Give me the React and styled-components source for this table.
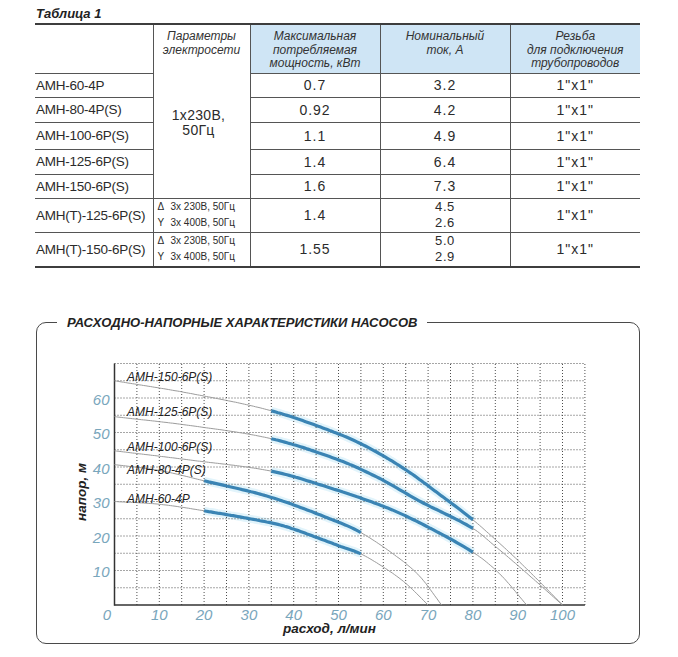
import React from 'react';
import styled, { createGlobalStyle } from 'styled-components';

const GlobalStyle = createGlobalStyle`
  body {
    margin: 0;
    background: #fff;
    font-family: "Liberation Sans", Arial, sans-serif;
    color: #2b2b2b;
  }
`;

const Page = styled.div`
  width: 678px;
  padding: 6px 0 0 35px;
  box-sizing: border-box;
`;

const Caption = styled.div`
  font-size: 13px;
  font-weight: bold;
  font-style: italic;
  line-height: 16px;
  padding-left: 1px;
  margin-bottom: 1px;
  color: #222;
`;

const Table = styled.table`
  width: 605px;
  border-collapse: collapse;
  table-layout: fixed;
  border-top: 2px solid #3d3d3d;
  border-bottom: 2px solid #3d3d3d;
`;

const HeadRow = styled.tr`
  height: 49px;
`;

const BodyRow = styled.tr`
  height: ${p => p.$h}px;
`;

const Th = styled.th`
  font-weight: normal;
  font-style: italic;
  font-size: 12px;
  line-height: 13.5px;
  color: #333;
  vertical-align: top;
  padding: 5px 2px 0;
  text-align: center;
  background: ${p => (p.$blue ? '#cfe5f5' : 'transparent')};
  border-left: ${p => (p.$first ? 'none' : '1px solid #555')};
  border-bottom: 1px solid #555;
`;

const SupplyCell = styled.td`
  vertical-align: top;
  text-align: center;
  padding: 5px 2px 0;
  border-left: 1px solid #555;
  border-bottom: 1px solid #555;
`;

const HeadText = styled.div`
  font-style: italic;
  font-size: 12px;
  line-height: 13.5px;
  color: #333;
`;

const Supply = styled.div`
  margin-top: 51px;
  font-size: 14px;
  line-height: 15px;
  letter-spacing: 0.3px;
  padding-right: 6px;
`;

const NameCell = styled.td`
  font-size: 13.5px;
  letter-spacing: -0.25px;
  padding: 0 0 0 1px;
  white-space: nowrap;
  vertical-align: middle;
  border-bottom: 1px solid #555;
`;

const ValueCell = styled.td`
  font-size: ${p => (p.$small ? 13 : 14)}px;
  line-height: ${p => (p.$small ? '16.5px' : '16px')};
  letter-spacing: ${p => (p.$small ? '0.6px' : '1px')};
  text-align: center;
  vertical-align: middle;
  padding: 0;
  border-left: 1px solid #555;
  border-bottom: 1px solid #555;
`;

const PhaseCell = styled.td`
  font-size: 10px;
  line-height: 16px;
  padding: 0 0 0 4px;
  vertical-align: middle;
  white-space: nowrap;
  overflow: hidden;
  border-left: 1px solid #555;
  border-bottom: 1px solid #555;
`;

const Sym = styled.span`
  display: inline-block;
  width: 13px;
`;

const Frame = styled.fieldset`
  width: 604px;
  margin: 47px 0 0 1px;
  padding: 0;
  border: 1.5px solid #4a4a4a;
  border-radius: 10px;
  box-sizing: border-box;
`;

const Legend = styled.legend`
  margin-left: 20px;
  padding: 0 10px;
  font-size: 13px;
  line-height: 15px;
  font-weight: bold;
  font-style: italic;
  color: #222;
`;

const Svg = styled.svg`
  display: block;
  font-family: "Liberation Sans", Arial, sans-serif;
`;

const GridLine = styled.line`
  stroke: #4d4d4d;
  stroke-width: 1;
  stroke-dasharray: 1 2;
`;

const AxisLine = styled.line`
  stroke: #333;
  stroke-width: 1.5;
`;

const ThinCurve = styled.path`
  fill: none;
  stroke: #9c9c9c;
  stroke-width: 1;
`;

const Glow = styled.path`
  fill: none;
  stroke: #e2f4fb;
  stroke-width: 8;
`;

const ThickCurve = styled.path`
  fill: none;
  stroke: #3a84b4;
  stroke-width: 3.2;
`;

const CurveLabel = styled.text`
  font-size: 12px;
  font-style: italic;
  fill: #222;
`;

const TickLabel = styled.text`
  font-size: 15px;
  font-style: italic;
  fill: #79a6bc;
  text-anchor: ${p => p.$anchor || 'middle'};
`;

const AxisTitle = styled.text`
  font-size: 13.5px;
  font-weight: bold;
  font-style: italic;
  fill: #222;
  text-anchor: middle;
`;

const rows = [
  { name: 'АМН-60-4Р', p: '0.7', i: ['3.2'], h: 24 },
  { name: 'АМН-80-4Р(S)', p: '0.92', i: ['4.2'], h: 25 },
  { name: 'АМН-100-6Р(S)', p: '1.1', i: ['4.9'], h: 27 },
  { name: 'АМН-125-6Р(S)', p: '1.4', i: ['6.4'], h: 25 },
  { name: 'АМН-150-6Р(S)', p: '1.6', i: ['7.3'], h: 24 },
  { name: 'АМН(Т)-125-6Р(S)', p: '1.4', i: ['4.5', '2.6'], h: 34, three: true },
  { name: 'АМН(Т)-150-6Р(S)', p: '1.55', i: ['5.0', '2.9'], h: 31, three: true },
];

// chart scale: page coordinates
const QX = q => 115 + q * 4.48;
const HY = h => 606 - h * 3.45;

const curves = [
  {
    label: 'АМН-150-6Р(S)', ly: 382, work: [35, 80],
    pts: [[0, 65], [17, 61.3], [35, 56.3], [50, 49.6], [57, 45.4], [65, 39.2], [72, 32.6], [80, 24.7], [85, 19], [90, 13], [95, 6.6], [100, 0]],
  },
  {
    label: 'АМН-125-6Р(S)', ly: 417, work: [35, 80],
    pts: [[0, 54.6], [17, 52], [35, 48.2], [49.5, 42.3], [59, 36.8], [68, 30.2], [80, 22.2], [85, 17], [90, 11.5], [95, 5.8], [100, 0]],
  },
  {
    label: 'АМН-100-6Р(S)', ly: 451.5, work: [35, 80],
    pts: [[0, 44.7], [17, 42], [35, 38.8], [47, 34.4], [60, 28.6], [68, 23.9], [80, 15.3], [86, 9], [92, 0]],
  },
  {
    label: 'АМН-80-4Р(S)', ly: 474.5, work: [20, 55],
    pts: [[0, 40.7], [10, 39], [20, 36], [35, 31.2], [50, 24], [55, 21], [62, 15], [68, 8.5], [73, 0]],
  },
  {
    label: 'АМН-60-4Р', ly: 503.5, work: [20, 55],
    pts: [[0, 30], [10, 29.2], [20, 27.3], [35, 23.8], [40, 22], [50, 17.2], [55, 14.8], [60, 11], [65, 6.3], [70, 0]],
  },
];

function hermite(pts, q) {
  const n = pts.length;
  let i = 0;
  while (i < n - 2 && q > pts[i + 1][0]) i++;
  const slope = k => {
    if (k === 0) return (pts[1][1] - pts[0][1]) / (pts[1][0] - pts[0][0]);
    if (k === n - 1) return (pts[n - 1][1] - pts[n - 2][1]) / (pts[n - 1][0] - pts[n - 2][0]);
    return (pts[k + 1][1] - pts[k - 1][1]) / (pts[k + 1][0] - pts[k - 1][0]);
  };
  const [q0, h0] = pts[i];
  const [q1, h1] = pts[i + 1];
  const d = q1 - q0;
  const t = (q - q0) / d;
  const t2 = t * t;
  const t3 = t2 * t;
  return (2 * t3 - 3 * t2 + 1) * h0 + (t3 - 2 * t2 + t) * d * slope(i) +
    (-2 * t3 + 3 * t2) * h1 + (t3 - t2) * d * slope(i + 1);
}

const pathFor = (pts, from, to) => {
  const out = [];
  for (let q = from; q <= to + 1e-6; q += 0.5) {
    out.push(`${QX(q).toFixed(1)},${HY(hermite(pts, q)).toFixed(1)}`);
  }
  return 'M' + out.join(' L');
};

const X0 = 37.5;
const Y0 = 331;

function Chart() {
  const qs = [];
  for (let q = 5; q <= 105; q += 5) qs.push(q);
  const hs = [];
  for (let h = 5; h <= 70; h += 5) hs.push(h);

  return (
    <Svg width="600" height="313" viewBox={`${X0} ${Y0} 600 313`}>
      {curves.map(c => (
        <Glow key={'g' + c.label} d={pathFor(c.pts, c.work[0], c.work[1])} />
      ))}
      {qs.map(q => (
        <GridLine key={'v' + q} x1={QX(q)} x2={QX(q)} y1={HY(0)} y2={HY(70)} />
      ))}
      {hs.map(h => (
        <GridLine key={'h' + h} x1={QX(0)} x2={QX(105)} y1={HY(h)} y2={HY(h)} />
      ))}
      <AxisLine x1={QX(0)} x2={QX(0)} y1={HY(70)} y2={HY(0) + 0.75} />
      <AxisLine x1={QX(0)} x2={QX(105)} y1={HY(0)} y2={HY(0)} />
      {curves.map(c => (
        <ThinCurve key={'t' + c.label} d={pathFor(c.pts, 0, c.pts[c.pts.length - 1][0])} />
      ))}
      {curves.map(c => (
        <ThickCurve key={'k' + c.label} d={pathFor(c.pts, c.work[0], c.work[1])} />
      ))}
      {curves.map(c => (
        <CurveLabel key={'l' + c.label} x="127.5" y={c.ly}>{c.label}</CurveLabel>
      ))}
      {[10, 20, 30, 40, 50, 60].map(h => (
        <TickLabel key={'y' + h} $anchor="end" x="110" y={HY(h) + 6.5}>{h}</TickLabel>
      ))}
      <TickLabel x="107.5" y="620.5">0</TickLabel>
      {[10, 20, 30, 40, 50, 60, 70, 80, 90, 100].map(q => (
        <TickLabel key={'x' + q} x={QX(q)} y="620.5">{q}</TickLabel>
      ))}
      <AxisTitle x="86" y="493" transform="rotate(-90 86 493)">напор, м</AxisTitle>
      <AxisTitle x="330" y="634">расход, л/мин</AxisTitle>
    </Svg>
  );
}

export default function App() {
  return (
    <Page>
      <GlobalStyle />
      <Caption>Таблица 1</Caption>
      <Table>
        <colgroup>
          <col style={{ width: 118 }} />
          <col style={{ width: 97 }} />
          <col style={{ width: 130 }} />
          <col style={{ width: 130 }} />
          <col style={{ width: 130 }} />
        </colgroup>
        <tbody>
          <HeadRow>
            <Th $first />
            <SupplyCell rowSpan={6}>
              <HeadText>Параметры<br />электросети</HeadText>
              <Supply>1x230В,<br />50Гц</Supply>
            </SupplyCell>
            <Th $blue>Максимальная<br />потребляемая<br />мощность, кВт</Th>
            <Th $blue>Номинальный<br />ток, А</Th>
            <Th $blue>Резьба<br />для подключения<br />трубопроводов</Th>
          </HeadRow>
          {rows.map(r => (
            <BodyRow key={r.name} $h={r.h}>
              <NameCell>{r.name}</NameCell>
              {r.three && (
                <PhaseCell>
                  <div><Sym>Δ</Sym>3х 230В, 50Гц</div>
                  <div><Sym>Y</Sym>3х 400В, 50Гц</div>
                </PhaseCell>
              )}
              <ValueCell>{r.p}</ValueCell>
              <ValueCell $small={r.i.length > 1}>
                {r.i.map(v => <div key={v}>{v}</div>)}
              </ValueCell>
              <ValueCell>1"x1"</ValueCell>
            </BodyRow>
          ))}
        </tbody>
      </Table>
      <Frame>
        <Legend>РАСХОДНО-НАПОРНЫЕ ХАРАКТЕРИСТИКИ НАСОСОВ</Legend>
        <Chart />
      </Frame>
    </Page>
  );
}
